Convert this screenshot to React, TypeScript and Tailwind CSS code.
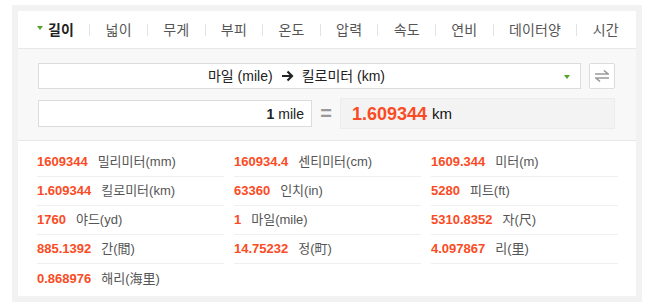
import React from "react";

const font = { fontFamily: '"Liberation Sans", "Noto Sans CJK KR", sans-serif' };

const tabs = ["길이", "넓이", "무게", "부피", "온도", "압력", "속도", "연비", "데이터양", "시간"];

const results: [string, string, string][] = [
  ["1609344", "밀리미터", "(mm)"],
  ["160934.4", "센티미터", "(cm)"],
  ["1609.344", "미터", "(m)"],
  ["1.609344", "킬로미터", "(km)"],
  ["63360", "인치", "(in)"],
  ["5280", "피트", "(ft)"],
  ["1760", "야드", "(yd)"],
  ["1", "마일", "(mile)"],
  ["5310.8352", "자", "(尺)"],
  ["885.1392", "간", "(間)"],
  ["14.75232", "정", "(町)"],
  ["4.097867", "리", "(里)"],
  ["0.868976", "해리", "(海里)"],
];

function Tri({ className }: { className?: string }) {
  return (
    <svg width="6" height="4" viewBox="0 0 6 4" className={className}>
      <polygon points="0,0 6,0 3,4" fill="#52a529" />
    </svg>
  );
}

export default function App() {
  return (
    <div className="bg-white w-[652px] h-[308px] overflow-hidden" style={font}>
      <div className="ml-[12px] mt-[5px] w-[630px] h-[297px] bg-[#f2f2f2] p-[6px]">
        <div className="bg-white h-[285px] flex flex-col">
          {/* tabs */}
          <div className="h-[37px] flex items-center justify-between pl-[19px] pr-[17px] text-[14px] tracking-[0.2px] leading-[16px]">
            {tabs.map((t, i) => (
              <React.Fragment key={t}>
                {i > 0 && <div className="w-px h-[12px] bg-[#e3e3e3]" />}
                <div
                  className={
                    i === 0
                      ? "flex items-center font-bold text-[#222]"
                      : "text-[#555]"
                  }
                >
                  {i === 0 && <Tri className="mr-[5px] mb-[3px]" />}
                  {t}
                </div>
              </React.Fragment>
            ))}
          </div>
          {/* converter */}
          <div className="bg-[#f8f8f8] border-t border-b border-[#e8e8e8] pt-[14px] pb-[11px] pl-[20px] pr-[21px] flex flex-col gap-[9px]">
            <div className="flex gap-[8px]">
              <div className="flex-1 h-[26px] bg-white border border-[#dcdcdc] relative flex items-center justify-center pr-[26px] text-[14px] text-[#222] leading-[16px]">
                <span>마일 (mile)</span>
                <svg width="13" height="12" viewBox="0 0 13 12" className="mx-[8px]">
                  <path d="M1 6 H11 M6.5 1.5 L11 6 L6.5 10.5" stroke="#222" strokeWidth="2.2" fill="none" />
                </svg>
                <span>킬로미터 (km)</span>
                <Tri className="absolute right-[10px] top-[11px]" />
              </div>
              <div className="w-[26px] h-[26px] bg-white border border-[#dcdcdc] rounded-[2px] flex items-center justify-center">
                <svg width="14" height="12" viewBox="0 0 14 12">
                  <path d="M0 4 H13 L9 0.5" stroke="#9a9a9a" strokeWidth="1.6" fill="none" />
                  <path d="M14 8 H1 L5 11.5" stroke="#9a9a9a" strokeWidth="1.6" fill="none" />
                </svg>
              </div>
            </div>
            <div className="flex items-center">
              <div className="w-[274px] h-[27px] bg-white border border-[#dcdcdc] flex items-center justify-end pr-[7px] text-[14px] text-[#222] leading-[16px]">
                <span className="font-bold">1</span>
                <span className="ml-[4px]">mile</span>
              </div>
              <div className="w-[28px] flex justify-center text-[#999] text-[20px] leading-[20px] font-bold pb-[2px]">=</div>
              <div className="flex-1 h-[31px] bg-[#f3f3f3] border border-[#ececec] flex items-center pl-[11px] leading-[20px]">
                <span className="font-bold text-[18px] text-[#fa4b24]">1.609344</span>
                <span className="ml-[5px] text-[15px] text-[#111]">km</span>
              </div>
            </div>
          </div>
          {/* results */}
          <div className="pt-[7px] pl-[19px] pr-[18px] grid grid-cols-3 gap-x-[10px]">
            {results.map(([v, k, u], i) => (
              <div
                key={i}
                className={
                  "h-[29px] flex items-center text-[13px] leading-[16px] " +
                  (i < 12 ? "border-b border-[#efefef]" : "")
                }
              >
                <span className="font-bold text-[#fa4b24]">{v}</span>
                <span className="ml-[10px] text-[#555]">{k}</span>
                <span className="text-[#555]">{u}</span>
              </div>
            ))}
          </div>
        </div>
      </div>
    </div>
  );
}
